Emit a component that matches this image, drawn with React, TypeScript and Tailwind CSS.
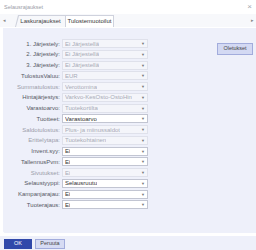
import React from "react";

type Row = {
  label: string;
  value: string;
  enabled: boolean;
  dimLabel?: boolean;
  spell?: boolean;
};

const rows: Row[] = [
  { label: "1. Järjestely:", value: "Ei Järjestellä", enabled: false },
  { label: "2. Järjestely:", value: "Ei Järjestellä", enabled: false },
  { label: "3. Järjestely:", value: "Ei Järjestellä", enabled: false },
  { label: "TulostusValuu:", value: "EUR", enabled: false },
  { label: "Summatulostus:", value: "Verottomina", enabled: false, dimLabel: true },
  { label: "Hintajärjestys:", value: "Varkvo-KesOsto-OstoHin", enabled: false },
  { label: "Varastoarvo:", value: "Tuotekortilta", enabled: false },
  { label: "Tuotteet:", value: "Varastoarvo", enabled: true, spell: true },
  { label: "Saldotulostus:", value: "Plus- ja miinussaldot", enabled: false, dimLabel: true },
  { label: "Erittelytapa:", value: "Tuotekohtainen", enabled: false, dimLabel: true },
  { label: "Invent.syy:", value: "Ei", enabled: true },
  { label: "TallennusPvm:", value: "Ei", enabled: true },
  { label: "Sivutukset:", value: "Ei", enabled: false, dimLabel: true },
  { label: "Selaustyyppi:", value: "Selausruutu", enabled: true },
  { label: "Kampanjarajau:", value: "Ei", enabled: true },
  { label: "Tuoterajaus:", value: "Ei", enabled: true },
];

const SelectBox: React.FC<{ row: Row }> = ({ row }) => (
  <div
    className={`relative flex items-center w-[86px] h-[9px] border pl-[2px] ${
      row.enabled
        ? "bg-white border-[#c2c5d2] text-[#333]"
        : "bg-[#f4f5fa] border-[#dfe1eb] text-[#a8abb7]"
    }`}
  >
    <span className="relative leading-none whitespace-nowrap overflow-hidden">
      {row.value}
      {row.spell && (
        <span className="absolute left-0 right-0 -bottom-[1.5px] h-[1px] bg-[#e02020]" />
      )}
    </span>
    <span className="absolute right-[2px] top-[2px] text-[4px] text-[#777] leading-none">
      ▼
    </span>
  </div>
);

export default function App() {
  return (
    <div className="w-[256px] h-[250px] bg-white flex flex-col overflow-hidden font-['Liberation_Sans',Arial,sans-serif] text-[6px]">
      {/* title bar */}
      <div className="h-[14px] flex items-center justify-between px-[4px] bg-white">
        <span className="text-[#9a9ca6] text-[5.5px]">Selausrajaukset</span>
        <span className="text-[#a5a7b0] text-[8px] leading-none">×</span>
      </div>

      {/* tabs */}
      <div className="h-[13px] flex items-end bg-[#f7f8fb] relative">
        <span className="absolute left-[3px] top-[3px] text-[5px] text-[#888]">◂</span>
        <span className="absolute right-[2px] top-[3px] text-[5px] text-[#888]">▸</span>
        <div className="ml-[15px] h-[12px] w-[50px] [clip-path:polygon(3px_0,100%_0,100%_100%,0_100%)] bg-[#cfd2dd] pl-[1px] pt-[1px]">
          <div className="w-full h-full bg-[#f7f8fb] flex items-center justify-center text-[#444] [clip-path:polygon(3px_0,100%_0,100%_100%,0_100%)]">
            Laskurajaukset
          </div>
        </div>
        <div className="h-[12px] w-[49px] flex items-center justify-center bg-white border border-b-0 border-[#cfd2dd] text-[#333]">
          Tulostemuotoilut
        </div>
      </div>

      {/* content */}
      <div className="flex-1 ml-[2px] bg-[#eef0fa] border border-r-0 border-white rounded-bl-[3px] flex">
        <div className="flex flex-col gap-[1.75px] pt-[11px]">
          {rows.map((row) => (
            <div key={row.label} className="flex items-center h-[9px]">
              <span
                className={`w-[59px] pr-[2px] text-right leading-none whitespace-nowrap ${
                  row.dimLabel ? "text-[#9a9daa]" : "text-[#555864]"
                }`}
              >
                {row.label}
              </span>
              <SelectBox row={row} />
            </div>
          ))}
        </div>
        <div className="flex-1 flex justify-end pt-[15px] pr-[3px]">
          <button className="w-[36px] h-[12px] bg-[#d3d9f3] border border-[#a2acdc] text-[#444] text-[5.5px] leading-none">
            Oletukset
          </button>
        </div>
      </div>

      {/* footer */}
      <div className="h-[16px] bg-[#eef0fa] border-t-[2px] border-white flex items-center gap-[3px] px-[4px] pt-[1px]">
        <button className="w-[28px] h-[10px] bg-[#3149aa] text-white text-[5.5px] leading-none">
          OK
        </button>
        <button className="w-[30px] h-[10px] bg-[#d6dbf3] border border-[#a2acdc] text-[#444] text-[5.5px] leading-none">
          Peruuta
        </button>
      </div>
    </div>
  );
}
